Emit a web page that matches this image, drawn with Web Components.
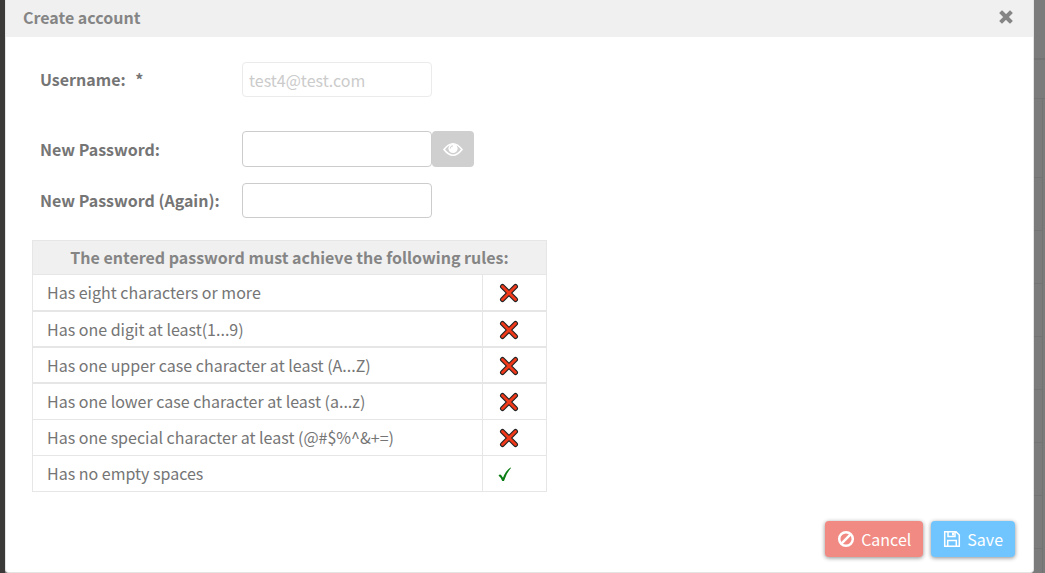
<!DOCTYPE html>
<html lang="en">
<head>
<meta charset="utf-8">
<title>Create account</title>
<style>
html, body { margin: 0; height: 100%; }
body {
  font: 16px/20px "Noto Sans CJK SC", "Noto Sans CJK JP", sans-serif;
  color: #757575;
}
</style>
</head>
<body>
<account-page></account-page>

<template id="account-page">
  <style>
    :host { display: flex; min-height: 100vh; background: #3b3a39; }
    .rail { flex: none; width: 5px; background: #3b3a39; }
    .back { flex: none; width: 11px; display: flex; flex-direction: column; background: #7b7b7b; }
    .back i { flex: none; box-sizing: border-box; height: 53px; margin-right: 2px; border: solid #737373; border-width: 0 1px 1px 0; }
    .back i:nth-child(-n+2) { margin-right: 0; border-right: 0; }
    .back i:nth-child(1) { height: 60px; border-bottom-width: 2px; }
    .back i:nth-child(2) { height: 39px; }
    .back i:nth-child(3) { height: 79px; }
    .back i:last-child { flex: 1; height: auto; border-bottom: 0; }
    modal-dialog { flex: 1; min-width: 0; }
    .form { display: grid; gap: 16px; padding: 25px 0 22px 8px; }
    form-field:first-child { margin-bottom: 18px; }
  </style>
  <div class="rail"></div>
  <modal-dialog heading="Create account">
    <div class="form">
      <form-field label="Username:" name="user" value="test4@test.com" required disabled></form-field>
      <form-field label="New Password:" name="pw" type="password" reveal></form-field>
      <form-field label="New Password (Again):" name="pw2" type="password"></form-field>
    </div>
    <password-rules></password-rules>
    <action-button slot="actions" kind="cancel" label="Cancel"></action-button>
    <action-button slot="actions" kind="save" label="Save"></action-button>
  </modal-dialog>
  <div class="back"><i></i><i></i><i></i><i></i><i></i><i></i><i></i><i></i><i></i><i></i><i></i></div>
</template>

<template id="modal-dialog">
  <style>
    :host { display: flex; background: #7b7b7b; }
    section {
      flex: 1; display: flex; flex-direction: column; background: #fff;
      border: solid #e4e4e4; border-width: 0 1px 1px 1px; border-radius: 0 0 4px 4px;
    }
    header { display: flex; justify-content: space-between; align-items: center; height: 37px; padding: 0 19px 3px 17px; background: #f0f0f0; box-sizing: border-box; }
    h1 { margin: 0; font-size: 16px; line-height: 20px; font-weight: 700; color: #858585; }
    button { display: block; padding: 0; border: 0; background: none; color: #858585; height: 16px; }
    svg { display: block; }
    main { flex: 1; padding: 0 26px; }
    footer { display: flex; justify-content: flex-end; gap: 8px; padding: 14px 18px 15px; }
  </style>
  <section role="dialog" aria-labelledby="title">
    <header>
      <h1 id="title"></h1>
      <button type="button" aria-label="Close"><svg width="16" height="16" viewBox="0 0 16 16"><path d="M4 4l8 8M12 4l-8 8" stroke="currentColor" stroke-width="4" stroke-linecap="square"/></svg></button>
    </header>
    <main><slot></slot></main>
    <footer><slot name="actions"></slot></footer>
  </section>
</template>

<template id="form-field">
  <style>
    :host { display: flex; align-items: center; }
    label { width: 202px; padding-bottom: 1px; font-weight: 700; }
    .mark { margin-left: 6px; }
    input {
      box-sizing: border-box; width: 190px; height: 35px; margin: 0; padding: 0 6px; border: 1px solid #ccc; border-radius: 4px;
      background: #fff; font: inherit; color: #757575;
    }
    :host([reveal]) input { height: 36px; }
    input:disabled { border-color: #ebebeb; color: #cbcbcb; }
    button { width: 42px; height: 36px; padding: 0; border: 0; border-radius: 4px; background: #cfcfcf; color: #fff; display: grid; place-items: center; }
  </style>
  <label for="box"></label>
  <input id="box">
</template>

<template id="password-rules">
  <style>
    :host { display: block; }
    table { width: 515px; max-width: 100%; border-collapse: separate; border-spacing: 0; table-layout: fixed; }
    th, td { box-sizing: border-box; border: 0 solid #e6e6e6; height: 36px; padding: 0 14px; text-align: left; }
    th { height: 35px; padding-bottom: 1px; border-width: 1px; background: #f0f0f0; color: #858585; text-align: center; }
    td:first-child { padding-bottom: 1px; border-left-width: 1px; }
    td:last-child { padding-top: 1px; border-left-width: 1px; border-right-width: 1px; }
    tr + tr td { border-top-width: 1px; }
    tr.ruled td { border-bottom-width: 1px; }
    tr:last-child td { height: 37px; border-bottom-width: 1px; }
    .mark { width: 65px; }
    svg { display: block; }
  </style>
  <table>
    <colgroup><col><col class="mark"></colgroup>
    <thead><tr><th colspan="2">The entered password must achieve the following rules:</th></tr></thead>
    <tbody></tbody>
  </table>
</template>

<template id="action-button">
  <style>
    :host { display: block; }
    button {
      display: flex; align-items: center; gap: 6px; height: 36px; padding: 0 12px 1px; border: 0; border-radius: 4px;
      font: inherit; color: #fff; box-shadow: 0 1px 4px rgba(0,0,0,.45);
    }
    .cancel { background: #f08a82; }
    .save { background: #70c5ff; }
    svg { display: block; }
  </style>
  <button type="button"></button>
</template>

<script>
class Base extends HTMLElement {
  constructor() {
    super();
    this.attachShadow({ mode: "open" }).append(document.getElementById(this.localName).content.cloneNode(true));
  }
  $(selector) { return this.shadowRoot.querySelector(selector); }
}
const CROSS = '<svg width="24" height="24" viewBox="0 0 24 24" role="img" aria-label="Not met"><path d="M5.5 5.5l13 13M18.5 5.5l-13 13" stroke="#222" stroke-width="5" stroke-linecap="round"/><path d="M5.5 5.5l13 13M18.5 5.5l-13 13" stroke="#f0391a" stroke-width="2.8" stroke-linecap="round"/></svg>';
const TICK = '<svg width="24" height="24" viewBox="0 0 24 24" role="img" aria-label="Met"><path d="M1.5 13.5q1.5-1.800 2.8-.2l1.700 2.500Q8.500 9 13.500 5.500l.5.400Q9.500 11 7 19H5.200Q4 15.500 1.500 13.500z" fill="#0b7d14"/></svg>';
const EYE = '<svg width="20" height="16" viewBox="0 0 20 16"><path d="M1 8.500q9-11.500 18 0q-9 11.500-18 0z" fill="none" stroke="#fff" stroke-width="1.700"/><circle cx="10" cy="7.500" r="4.600" fill="#fff"/><path d="M7.300 7.500A2.700 2.700 0 0 1 10 4.800" fill="none" stroke="#cfcfcf" stroke-width="1"/></svg>';
const BAN = '<svg width="18" height="18" viewBox="0 0 18 18" fill="none" stroke="#fff" stroke-width="2.500"><circle cx="9" cy="9" r="6.800"/><path d="M4.200 13.800l9.600-9.600"/></svg>';
const DISK = '<svg width="18" height="18" viewBox="0 0 18 18" fill="none" stroke="#fff" stroke-width="1.500"><path d="M1.700 1.700h11.300l3.300 3.300v11.300H1.700zM4.700 16v-5.500h8.600V16M5 2v4.500h7V2"/><path d="M9 2.500h2v3H9z" fill="#fff" stroke="none"/></svg>';

customElements.define("form-field", class extends Base {
  connectedCallback() {
    const label = this.$("label"), box = this.$("input");
    label.textContent = this.getAttribute("label");
    if (this.hasAttribute("required")) label.insertAdjacentHTML("beforeend", ' <span class="mark">*</span>');
    box.type = this.getAttribute("type") || "text";
    box.name = this.getAttribute("name");
    box.value = this.getAttribute("value") || "";
    box.disabled = this.hasAttribute("disabled");
    if (this.hasAttribute("reveal")) {
      box.insertAdjacentHTML("afterend", `<button type="button" aria-label="Show password">${EYE}</button>`);
      this.$("button").onclick = () => { box.type = box.type === "password" ? "text" : "password"; };
    }
  }
});

customElements.define("password-rules", class extends Base {
  connectedCallback() {
    const rules = [
      ["Has eight characters or more", false], ["Has one digit at least(1...9)", false],
      ["Has one upper case character at least (A...Z)", false], ["Has one lower case character at least (a...z)", false],
      ["Has one special character at least (@#$%^&+=)", false], ["Has no empty spaces", true]
    ];
    rules.forEach(([text, met], i) => {
      const row = this.$("tbody").insertRow();
      if (i < 3) row.className = "ruled";
      row.insertCell().textContent = text;
      row.insertCell().innerHTML = met ? TICK : CROSS;
    });
  }
});

customElements.define("action-button", class extends Base {
  connectedCallback() {
    const kind = this.getAttribute("kind"), button = this.$("button");
    button.className = kind;
    button.innerHTML = (kind === "save" ? DISK : BAN) + "<span></span>";
    this.$("span").textContent = this.getAttribute("label");
  }
});

customElements.define("modal-dialog", class extends Base {
  connectedCallback() { this.$("h1").textContent = this.getAttribute("heading"); }
});

customElements.define("account-page", class extends Base {});
</script>
</body>
</html>
